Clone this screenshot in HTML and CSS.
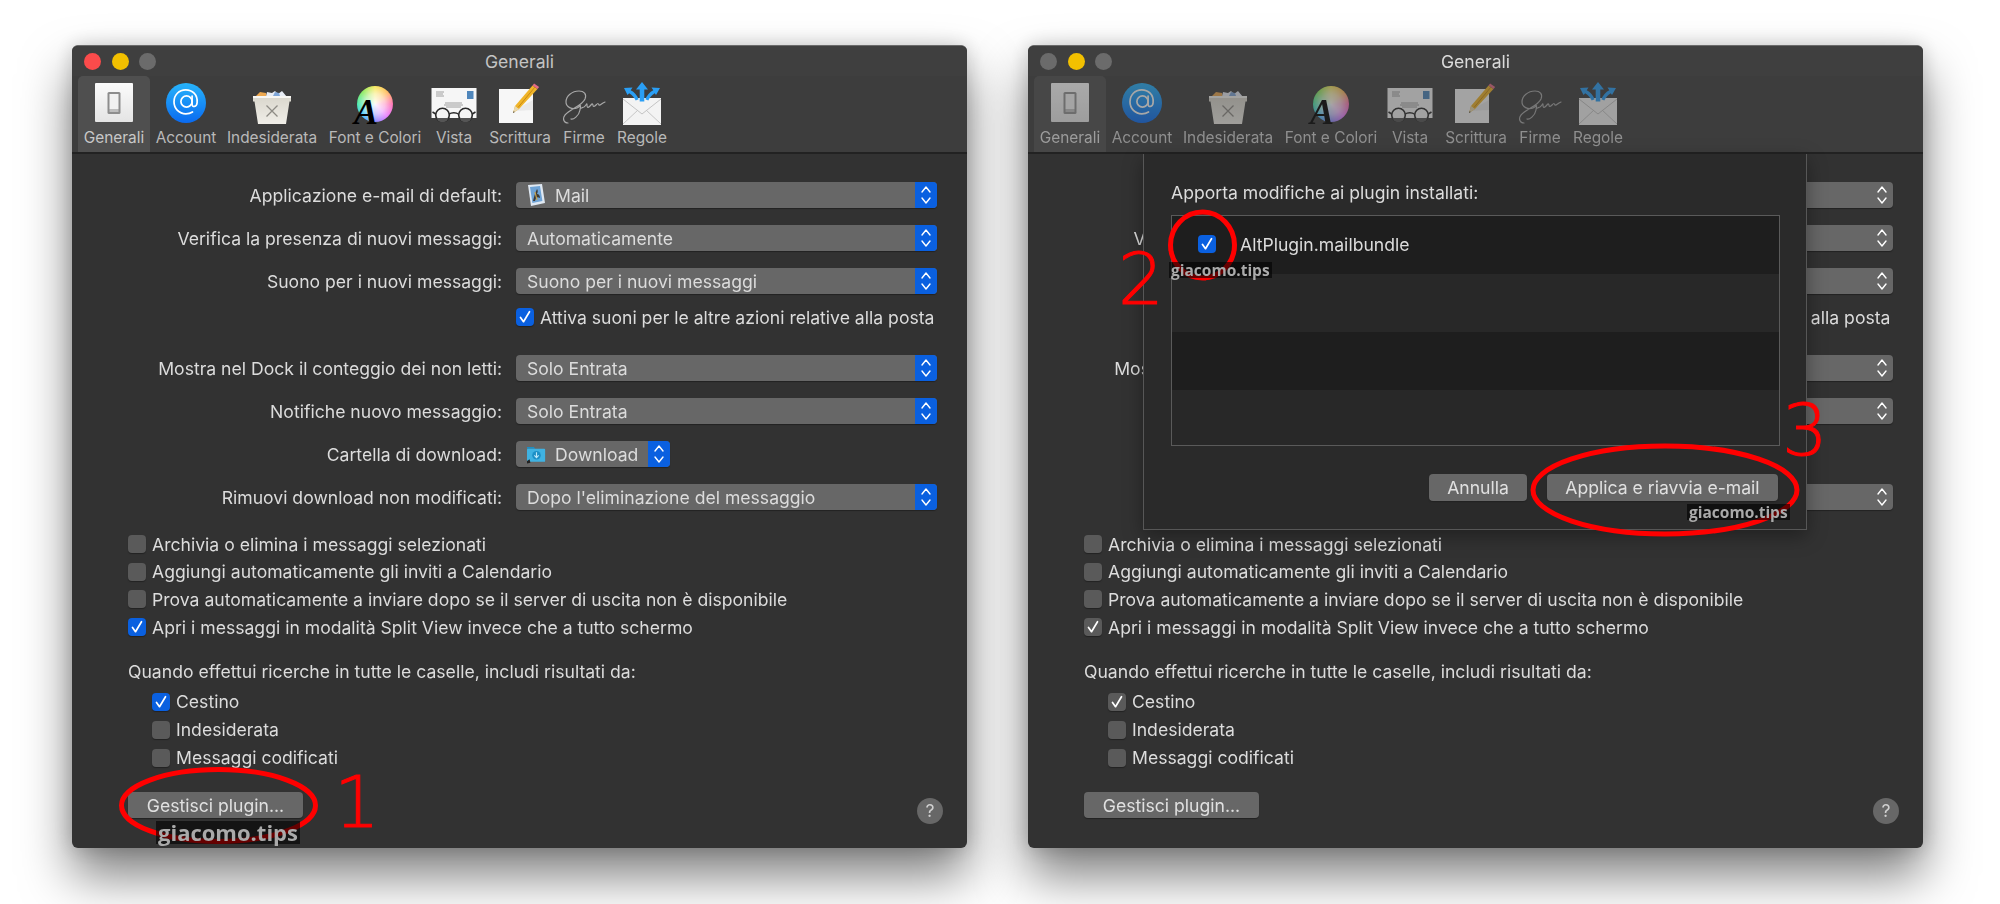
FILE: index.html
```html
<!DOCTYPE html>
<html lang="it">
<head>
    <meta charset="UTF-8">
    <title>Generali</title>
    <link rel="stylesheet" href="styles.css">
</head>
<body>
    <!-- icone condivise fra le due finestre -->
    <svg class="defs" width="0" height="0">
        <defs>
            <linearGradient id="blueGrad" x1="0" y1="0" x2="0" y2="1">
                <stop offset="0" stop-color="#27b4fb"/>
                <stop offset="1" stop-color="#0a6af0"/>
            </linearGradient>
            <linearGradient id="switchGrad" x1="0" y1="0" x2="0" y2="1">
                <stop offset="0" stop-color="#fbfbfb"/>
                <stop offset="1" stop-color="#e4e4e4"/>
            </linearGradient>
            <linearGradient id="bucketGrad" x1="0" y1="0" x2="0" y2="1">
                <stop offset="0" stop-color="#d9d6cc"/>
                <stop offset="1" stop-color="#f0eee8"/>
            </linearGradient>
        </defs>
        <symbol id="i-switch" viewBox="0 0 40 40">
            <rect x="1" y="0" width="38" height="39" rx="1" fill="url(#switchGrad)"/>
            <rect x="13.5" y="9" width="13" height="22" rx="1.5" fill="#8d8d8d"/>
            <rect x="15.5" y="11" width="9" height="15" fill="#f1f1f1"/>
            <rect x="15.5" y="26" width="9" height="3" fill="#bdbdbd"/>
        </symbol>
        <symbol id="i-account" viewBox="0 0 40 40">
            <circle cx="20" cy="20" r="20" fill="url(#blueGrad)"/>
            <circle cx="20.5" cy="18.5" r="5.6" fill="none" stroke="#fff" stroke-width="1.7"/>
            <path d="M26.1 13v8.4c0 3 4.6 3 5-1.600 .8-8.400-5-13-11.400-13C13 6.800 8 12 8 18.800c0 7 5.200 12 11.800 12 2.600 0 4.800-.6 6.700-1.800" fill="none" stroke="#fff" stroke-width="1.700" stroke-linecap="round"/>
        </symbol>
        <symbol id="i-trash" viewBox="0 0 40 36">
            <path d="M3 9l5-5 6 1 1 4z" fill="#eda850"/>
            <path d="M14 9l1-5 5 1 3-2 3 3 4-3 5 6z" fill="#e8edf5"/>
            <path d="M21 8l2-4 4 1 1 3z" fill="#7fa6d8"/>
            <path d="M1 8h38v5.500h-1.500L34 36H6L2.500 13.500H1z" fill="url(#bucketGrad)"/>
            <rect x="1" y="8" width="38" height="2" fill="#f8f7f3"/>
            <path d="M14.500 17.500l11 11M25.500 17.500l-11 11" stroke="#8d8b85" stroke-width="1.300"/>
        </symbol>
        <symbol id="i-vista" viewBox="0 0 46 34">
            <rect x="0.500" y="0" width="45" height="30" fill="#f6f6f6"/>
            <rect x="36" y="3" width="6.500" height="8" fill="#4f86bb"/>
            <path d="M5 4h8M5 6h7M5 8h8M14 15h17M13 17h19M15 19h15" stroke="#8b8b8b" stroke-width=".8"/>
            <circle cx="11.500" cy="27" r="6.800" fill="none" stroke="#2a2a2a" stroke-width="1.600"/>
            <circle cx="34.500" cy="27" r="6.800" fill="none" stroke="#2a2a2a" stroke-width="1.600"/>
            <path d="M18.300 26c2-1.800 7-1.800 9 0M4.700 26L1.500 24M41.300 26l3.200-2" fill="none" stroke="#2a2a2a" stroke-width="1.500"/>
            <path d="M5.500 30a6.400 6.400 0 0 0 12 0zM28.500 30a6.400 6.400 0 0 0 12 0z" fill="#555"/>
        </symbol>
        <symbol id="i-pen" viewBox="0 0 42 42">
            <rect x="0" y="7" width="34" height="34" fill="#f7f7f7"/>
            <path d="M14 29l20-11v10z" fill="#e3e3e3" opacity=".7"/>
            <path d="M14 31l2-7L33.500 3.500l5 3.500L20 27z" fill="#f0b428"/>
            <path d="M16 24l4 3-6 4z" fill="#e8d8b0"/>
            <path d="M14.700 29.200l-.7 1.800 1.800-1z" fill="#333"/>
            <path d="M33.500 3.500l1.600-1.900 5 3.500-1.600 1.900z" fill="#e36b86"/>
            <path d="M19 25.500L36 5" stroke="#c98a14" stroke-width="1"/>
        </symbol>
        <symbol id="i-sign" viewBox="0 0 46 34">
            <path d="M7 33C3 33 1 29 4 25c5-6 17-9 20-16 2-5-1-8-6-8C11 1 5 6 5 12c0 5 6 8 11 6 4-2 4-5 3 2-1 6-7 10-9 9M19 15c1 5 1 3 4 2 2-1 3-5 3-2 0 3 1 3 3 1 2-2 2-3 3-1 0 2 1 2 3 0 2-2 2-2 3 0 1 1 3-2 6-3" fill="none" stroke="#a8a8a8" stroke-width="1.200" stroke-linecap="round"/>
        </symbol>
        <symbol id="i-rules" viewBox="0 0 40 43">
            <rect x="1" y="16" width="38" height="27" fill="#f3f3f3"/>
            <path d="M1 42l15-14M39 42L24 28" stroke="#bbb" stroke-width=".8"/>
            <path d="M1 17l19 15 19-15" fill="none" stroke="#c4c4c4" stroke-width="1"/>
            <path d="M20 0l-6 7.500h3.700v12h4.600v-12H26z" fill="#2a9ff5"/>
            <path d="M2 6l8.500-.5-1.800 2.800c3.500 1.800 6.500 5 8 9l-3 1.200c-1.300-3-3.500-5.500-6.500-7.300L5.500 13z" fill="#2a9ff5"/>
            <path d="M38 6l-8.500-.5 1.800 2.800c-3.500 1.800-6.500 5-8 9l3 1.200c1.300-3 3.500-5.500 6.500-7.300l1.200 1.800z" fill="#2a9ff5"/>
        </symbol>
        <symbol id="i-updown" viewBox="0 0 12 22">
            <path d="M2 8l4-5 4 5M2 14l4 5 4-5" fill="none" stroke="#fff" stroke-width="1.400" stroke-linecap="round" stroke-linejoin="round"/>
        </symbol>
        <symbol id="i-tick" viewBox="0 0 18 18">
            <path d="M4.500 9.500l3 4.200 6-10" fill="none" stroke="#fff" stroke-width="1.700" stroke-linecap="round" stroke-linejoin="round"/>
        </symbol>
        <symbol id="i-mail" viewBox="0 0 19 22">
            <path d="M1 1l14-1 3 19-14 3z" fill="#dfe8f2"/>
            <path d="M3 3l10-1 2.400 15-10 2z" fill="#6ea3d6"/>
            <path d="M6 17c1-4 2-8 4-12 1 1 1 3 0 5 2 0 3 2 3 4-2-1-3-1-4 0l-1 3z" fill="#3c3a36"/>
            <path d="M8 8l2 8" stroke="#c6a04a" stroke-width="1.200"/>
        </symbol>
        <symbol id="i-folder" viewBox="0 0 22 22">
            <path d="M0 3h8l1.500 2H0z" fill="#1e8fc4"/>
            <rect x="0" y="5" width="21" height="15" rx="1" fill="#3fb2e2"/>
            <circle cx="11" cy="12.500" r="5" fill="#1d8fc6"/>
            <path d="M11 9v6M8.500 12.700L11 15.200l2.500-2.500" fill="none" stroke="#bfe9fa" stroke-width="1.300"/>
            <path d="M0 22l4-1-1-4-3 2z" fill="#222"/>
        </symbol>
    </svg>

    <main class="desktop">
        <section class="window">
            <header class="titlebar">
                <div class="lights">
                    <span class="light light-red"></span>
                    <span class="light light-yellow"></span>
                    <span class="light light-off"></span>
                </div>
                <div class="title">Generali</div>
            </header>
            <nav class="toolbar">
                <a class="tab tab-generali selected"><svg class="ico ico-switch"><use href="#i-switch"/></svg><span>Generali</span></a>
                <a class="tab tab-account"><svg class="ico ico-account"><use href="#i-account"/></svg><span>Account</span></a>
                <a class="tab tab-junk"><svg class="ico ico-trash"><use href="#i-trash"/></svg><span>Indesiderata</span></a>
                <a class="tab tab-font"><div class="ico wheel"><b>A</b></div><span>Font e Colori</span></a>
                <a class="tab tab-vista"><svg class="ico ico-vista"><use href="#i-vista"/></svg><span>Vista</span></a>
                <a class="tab tab-write"><svg class="ico ico-pen"><use href="#i-pen"/></svg><span>Scrittura</span></a>
                <a class="tab tab-sign"><svg class="ico ico-sign"><use href="#i-sign"/></svg><span>Firme</span></a>
                <a class="tab tab-rules"><svg class="ico ico-rules"><use href="#i-rules"/></svg><span>Regole</span></a>
            </nav>
            <div class="content">
                <div class="row">
                    <label class="row-label">Applicazione e-mail di default:</label>
                    <div class="select"><svg class="sel-ico"><use href="#i-mail"/></svg><span>Mail</span><i class="stepper"><svg><use href="#i-updown"/></svg></i></div>
                </div>
                <div class="row">
                    <label class="row-label">Verifica la presenza di nuovi messaggi:</label>
                    <div class="select"><span>Automaticamente</span><i class="stepper"><svg><use href="#i-updown"/></svg></i></div>
                </div>
                <div class="row">
                    <label class="row-label">Suono per i nuovi messaggi:</label>
                    <div class="select"><span>Suono per i nuovi messaggi</span><i class="stepper"><svg><use href="#i-updown"/></svg></i></div>
                </div>
                <div class="check check-sound"><i class="box on"><svg><use href="#i-tick"/></svg></i>Attiva suoni per le altre azioni relative alla posta</div>
                <div class="row">
                    <label class="row-label">Mostra nel Dock il conteggio dei non letti:</label>
                    <div class="select"><span>Solo Entrata</span><i class="stepper"><svg><use href="#i-updown"/></svg></i></div>
                </div>
                <div class="row">
                    <label class="row-label">Notifiche nuovo messaggio:</label>
                    <div class="select"><span>Solo Entrata</span><i class="stepper"><svg><use href="#i-updown"/></svg></i></div>
                </div>
                <div class="row">
                    <label class="row-label">Cartella di download:</label>
                    <div class="select select-short"><svg class="sel-ico"><use href="#i-folder"/></svg><span>Download</span><i class="stepper"><svg><use href="#i-updown"/></svg></i></div>
                </div>
                <div class="row">
                    <label class="row-label">Rimuovi download non modificati:</label>
                    <div class="select"><span>Dopo l'eliminazione del messaggio</span><i class="stepper"><svg><use href="#i-updown"/></svg></i></div>
                </div>

                <div class="checks">
                    <div class="check"><i class="box"></i>Archivia o elimina i messaggi selezionati</div>
                    <div class="check"><i class="box"></i>Aggiungi automaticamente gli inviti a Calendario</div>
                    <div class="check"><i class="box"></i>Prova automaticamente a inviare dopo se il server di uscita non è disponibile</div>
                    <div class="check"><i class="box on"><svg><use href="#i-tick"/></svg></i>Apri i messaggi in modalità Split View invece che a tutto schermo</div>
                </div>
                <div class="search-title">Quando effettui ricerche in tutte le caselle, includi risultati da:</div>
                <div class="checks checks-sub">
                    <div class="check"><i class="box on"><svg><use href="#i-tick"/></svg></i>Cestino</div>
                    <div class="check"><i class="box"></i>Indesiderata</div>
                    <div class="check"><i class="box"></i>Messaggi codificati</div>
                </div>
                <div class="footer">
                    <button class="btn btn-plugin">Gestisci plugin...</button>
                    <span class="help">?</span>
                </div>
            </div>

            <svg class="marks"><ellipse cx="146.500" cy="759.500" rx="97" ry="36"/></svg>
            <div class="digit digit-1">1</div>
            <div class="wm wm-big wm-1">giacomo.tips</div>
        </section>

        <section class="window inactive">
            <header class="titlebar">
                <div class="lights">
                    <span class="light light-off"></span>
                    <span class="light light-yellow"></span>
                    <span class="light light-off"></span>
                </div>
                <div class="title">Generali</div>
            </header>
            <nav class="toolbar">
                <a class="tab tab-generali selected"><svg class="ico ico-switch"><use href="#i-switch"/></svg><span>Generali</span></a>
                <a class="tab tab-account"><svg class="ico ico-account"><use href="#i-account"/></svg><span>Account</span></a>
                <a class="tab tab-junk"><svg class="ico ico-trash"><use href="#i-trash"/></svg><span>Indesiderata</span></a>
                <a class="tab tab-font"><div class="ico wheel"><b>A</b></div><span>Font e Colori</span></a>
                <a class="tab tab-vista"><svg class="ico ico-vista"><use href="#i-vista"/></svg><span>Vista</span></a>
                <a class="tab tab-write"><svg class="ico ico-pen"><use href="#i-pen"/></svg><span>Scrittura</span></a>
                <a class="tab tab-sign"><svg class="ico ico-sign"><use href="#i-sign"/></svg><span>Firme</span></a>
                <a class="tab tab-rules"><svg class="ico ico-rules"><use href="#i-rules"/></svg><span>Regole</span></a>
            </nav>
            <div class="content">
                <div class="row">
                    <label class="row-label">Applicazione e-mail di default:</label>
                    <div class="select"><svg class="sel-ico"><use href="#i-mail"/></svg><span>Mail</span><i class="stepper"><svg><use href="#i-updown"/></svg></i></div>
                </div>
                <div class="row">
                    <label class="row-label">Verifica la presenza di nuovi messaggi:</label>
                    <div class="select"><span>Automaticamente</span><i class="stepper"><svg><use href="#i-updown"/></svg></i></div>
                </div>
                <div class="row">
                    <label class="row-label">Suono per i nuovi messaggi:</label>
                    <div class="select"><span>Suono per i nuovi messaggi</span><i class="stepper"><svg><use href="#i-updown"/></svg></i></div>
                </div>
                <div class="check check-sound"><i class="box on"><svg><use href="#i-tick"/></svg></i>Attiva suoni per le altre azioni relative alla posta</div>
                <div class="row">
                    <label class="row-label">Mostra nel Dock il conteggio dei non letti:</label>
                    <div class="select"><span>Solo Entrata</span><i class="stepper"><svg><use href="#i-updown"/></svg></i></div>
                </div>
                <div class="row">
                    <label class="row-label">Notifiche nuovo messaggio:</label>
                    <div class="select"><span>Solo Entrata</span><i class="stepper"><svg><use href="#i-updown"/></svg></i></div>
                </div>
                <div class="row">
                    <label class="row-label">Cartella di download:</label>
                    <div class="select select-short"><svg class="sel-ico"><use href="#i-folder"/></svg><span>Download</span><i class="stepper"><svg><use href="#i-updown"/></svg></i></div>
                </div>
                <div class="row">
                    <label class="row-label">Rimuovi download non modificati:</label>
                    <div class="select"><span>Dopo l'eliminazione del messaggio</span><i class="stepper"><svg><use href="#i-updown"/></svg></i></div>
                </div>

                <div class="checks">
                    <div class="check"><i class="box"></i>Archivia o elimina i messaggi selezionati</div>
                    <div class="check"><i class="box"></i>Aggiungi automaticamente gli inviti a Calendario</div>
                    <div class="check"><i class="box"></i>Prova automaticamente a inviare dopo se il server di uscita non è disponibile</div>
                    <div class="check"><i class="box on"><svg><use href="#i-tick"/></svg></i>Apri i messaggi in modalità Split View invece che a tutto schermo</div>
                </div>
                <div class="search-title">Quando effettui ricerche in tutte le caselle, includi risultati da:</div>
                <div class="checks checks-sub">
                    <div class="check"><i class="box on"><svg><use href="#i-tick"/></svg></i>Cestino</div>
                    <div class="check"><i class="box"></i>Indesiderata</div>
                    <div class="check"><i class="box"></i>Messaggi codificati</div>
                </div>
                <div class="footer">
                    <button class="btn btn-plugin">Gestisci plugin...</button>
                    <span class="help">?</span>
                </div>
            </div>

            <!-- foglio "gestisci plugin" sopra la finestra -->
            <div class="sheet">
                <div class="sheet-title">Apporta modifiche ai plugin installati:</div>
                <div class="plugin-list">
                    <div class="plugin-row first"><i class="box on"><svg><use href="#i-tick"/></svg></i>AltPlugin.mailbundle</div>
                    <div class="plugin-row"></div>
                    <div class="plugin-row"></div>
                    <div class="plugin-row"></div>
                </div>
                <div class="sheet-actions">
                    <button class="btn btn-cancel">Annulla</button>
                    <button class="btn btn-apply">Applica e riavvia e-mail</button>
                </div>
            </div>

            <svg class="marks">
                <ellipse cx="174.500" cy="199" rx="32" ry="33"/>
                <ellipse cx="637" cy="444" rx="132" ry="44"/>
            </svg>
            <div class="digit digit-2">2</div>
            <div class="digit digit-3">3</div>
            <div class="wm wm-2">giacomo.tips</div>
            <div class="wm wm-3">giacomo.tips</div>
        </section>
    </main>
</body>
</html>
```

FILE: styles.css
```css
* {
    box-sizing: border-box;
}

body {
    margin: 0;
    height: 904px;
    overflow: hidden;
    background-color: #fff;
    font-family: Inter, "Liberation Sans", sans-serif;
    font-size: 17.6px;
    color: #dcdcdc;
}

.defs {
    position: absolute;
}

.desktop {
    display: flex;
    gap: 61px;
    padding: 45px 0 0 72px;
}

/* finestra */
.window {
    position: relative;
    width: 895px;
    height: 803px;
    flex: none;
    background-color: #323232;
    border-radius: 6px;
    border-top: 1px solid #6a6a6a;
    box-shadow: 0 28px 50px rgba(0, 0, 0, 0.5), 0 0 20px rgba(0, 0, 0, 0.18);
    filter: blur(0.35px);
}

.titlebar {
    display: grid;
    grid-template-columns: 1fr auto 1fr;
    align-items: center;
    height: 30px;
    padding-left: 12px;
    background-color: #3f3f3f;
    border-radius: 6px 6px 0 0;
}

.lights {
    display: flex;
    gap: 10.5px;
}

.light {
    width: 17px;
    height: 17px;
    border-radius: 50%;
}

.light-red {
    background-color: #fb4b4b;
}

.light-yellow {
    background-color: #f2c000;
}

.light-off {
    background-color: #6b6b6b;
}

.title {
    color: #c4c4c4;
    padding-right: 12px;
}

.toolbar {
    display: flex;
    height: 78px;
    padding-left: 6px;
    background-color: #3d3d3d;
    border-bottom: 2px solid #222;
}

.tab {
    display: flex;
    flex-direction: column;
    align-items: center;
    padding-top: 7px;
    border-radius: 5px 5px 0 0;
    color: #b9b9b9;
    font-size: 15.4px;
    white-space: nowrap;
}

.tab span {
    position: absolute;
    top: 82px;
}

.tab.selected {
    background-color: #4f4f4f;
    color: #c8c8c8;
}

.tab-generali, .tab-account { width: 72px; }
.tab-junk { width: 100px; }
.tab-font { width: 106px; }
.tab-vista { width: 52px; }
.tab-write { width: 80px; }
.tab-sign { width: 48px; }
.tab-rules { width: 68px; }

.ico {
    flex: none;
}

.ico-switch, .ico-account {
    width: 40px;
    height: 40px;
}

.ico-trash {
    width: 40px;
    height: 36px;
    margin-top: 5px;
}

.wheel {
    position: relative;
    width: 36px;
    height: 36px;
    margin-top: 3px;
    border-radius: 50%;
    background:
        radial-gradient(circle, rgba(255, 255, 255, 0.95) 0, rgba(255, 255, 255, 0.6) 40%, rgba(255, 255, 255, 0) 78%),
        conic-gradient(#f7e64a, #ffb347, #ff5fa8, #e56cff, #7a7cff, #2bb8ff, #2ee6a0, #7fe84a, #f7e64a);
}

.wheel b {
    position: absolute;
    left: -3px;
    top: 8px;
    font: italic bold 36px/36px "Liberation Serif", serif;
    color: #000;
}

.ico-vista {
    width: 46px;
    height: 34px;
    margin-top: 5px;
}

.ico-pen {
    width: 42px;
    height: 42px;
    margin-top: -1px;
}

.ico-sign {
    width: 46px;
    height: 34px;
    margin-top: 7px;
}

.ico-rules {
    width: 40px;
    height: 43px;
    margin-top: -1px;
}

/* contenuto */
.content {
    padding: 28px 30px 0 56px;
}

.row {
    display: flex;
    align-items: center;
    height: 26px;
    margin-bottom: 17px;
    margin-left: -56px;
}

.row-label {
    width: 430px;
    margin-right: 14px;
    text-align: right;
    white-space: nowrap;
}

.select {
    position: relative;
    display: flex;
    align-items: center;
    width: 421px;
    height: 26px;
    padding-left: 11px;
    border-radius: 4px;
    background-color: #676767;
    box-shadow: 0 1px 1px #222;
}

.select-short {
    width: 154px;
}

.sel-ico {
    width: 19px;
    height: 22px;
    margin-right: 9px;
}

.stepper {
    position: absolute;
    right: 0;
    top: 0;
    display: flex;
    align-items: center;
    justify-content: center;
    width: 22px;
    height: 26px;
    border-radius: 0 4px 4px 0;
    background-color: #0a60e0;
}

.stepper svg {
    width: 12px;
    height: 22px;
}

.check {
    display: flex;
    align-items: center;
    height: 18px;
    white-space: nowrap;
}

.box {
    flex: none;
    width: 18px;
    height: 18px;
    margin-right: 6px;
    border-radius: 4px;
    background-color: #5a5a5a;
    box-shadow: 0 1px 1px #222;
}

.box svg {
    display: block;
    width: 18px;
    height: 18px;
}

.box.on {
    background-color: #0a60e0;
}

.check-sound {
    margin: -3px 0 29px 388px;
}

.checks {
    display: flex;
    flex-direction: column;
    gap: 9.7px;
    margin-top: 25px;
}

.search-title {
    margin-top: 24px;
    line-height: 24px;
    white-space: nowrap;
}

.checks-sub {
    margin: 8.5px 0 0 24px;
    gap: 10px;
}

.footer {
    display: flex;
    justify-content: space-between;
    margin-top: 25.5px;
}

.btn {
    height: 26px;
    padding: 0;
    border: none;
    border-radius: 4px;
    background-color: #676767;
    box-shadow: 0 1px 1px #222;
    font: inherit;
    color: #e0e0e0;
}

.btn-plugin {
    width: 175px;
}

.help {
    width: 26px;
    height: 26px;
    margin: 6px -6px 0 0;
    border-radius: 50%;
    background-color: #676767;
    text-align: center;
    line-height: 26px;
    color: #d0d0d0;
}

/* finestra in secondo piano */
.inactive .title {
    color: #dadada;
}

.inactive .tab {
    color: #8f8f8f;
}

.inactive .tab.selected {
    background-color: #474747;
    color: #9c9c9c;
}

.inactive .ico {
    opacity: 0.55;
}

.inactive .stepper {
    background-color: transparent;
}

.inactive .box.on {
    background-color: #5a5a5a;
}

/* foglio */
.sheet {
    position: absolute;
    left: 115px;
    top: 108px;
    width: 664px;
    height: 376px;
    padding: 28px 27px 0;
    background-color: #2a2a2a;
    border: 1px solid #575757;
    border-top: none;
    box-shadow: 0 6px 18px rgba(0, 0, 0, 0.35);
}

.sheet-title {
    line-height: 22px;
}

.plugin-list {
    height: 231px;
    margin-top: 11px;
    width: 609px;
    overflow: hidden;
    border: 1px solid #5a5a5a;
}

.plugin-row {
    display: flex;
    align-items: center;
    height: 58px;
    padding-left: 26px;
    background-color: #282828;
}

.plugin-row:nth-child(odd) {
    background-color: #1e1e1e;
}

.plugin-row.first {
    padding-bottom: 2px;
}

.plugin-row .box {
    margin-right: 24px;
}

.plugin-row .box.on {
    background-color: #0a60e0;
}

.sheet-actions {
    display: flex;
    justify-content: flex-end;
    gap: 20px;
    width: 607px;
    margin-top: 28px;
}

.btn-cancel {
    width: 98px;
    height: 27px;
}

.btn-apply {
    width: 231px;
    height: 27px;
}

/* annotazioni rosse e watermark */
.marks {
    position: absolute;
    left: 0;
    top: 0;
    width: 895px;
    height: 803px;
    pointer-events: none;
}

.marks ellipse {
    fill: none;
    stroke: #f00;
    stroke-width: 5;
}

.digit {
    position: absolute;
    font-family: "DejaVu Sans", sans-serif;
    font-weight: 200;
    font-size: 72px;
    line-height: 72px;
    color: #f00;
    -webkit-text-stroke: 1px #f00;
}

.digit-1 { left: 262px; top: 720px; }
.digit-2 { left: 90px; top: 197px; }
.digit-3 { left: 754px; top: 348px; }

.wm {
    position: absolute;
    padding: 0 2px;
    background-color: rgba(0, 0, 0, 0.6);
    font-family: "Open Sans", sans-serif;
    font-weight: 700;
    font-size: 15.5px;
    line-height: 16px;
    color: #aaa;
}

.wm-big {
    font-size: 22px;
    line-height: 23px;
}

.wm-1 { left: 84px; top: 775px; }
.wm-2 { left: 141px; top: 216px; }
.wm-3 { left: 659px; top: 458px; }
```
